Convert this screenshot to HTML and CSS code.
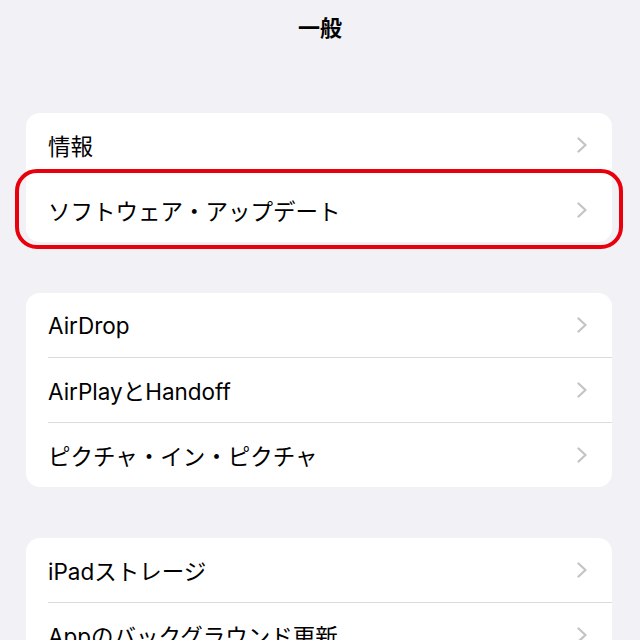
FILE: index.html
```html
<!DOCTYPE html>
<html lang="ja">
<head>
<meta charset="utf-8">
<title>一般</title>
<link rel="stylesheet" href="styles.css">
</head>
<body>
<div class="page">
  <header class="header"><h1 class="title">一般</h1></header>
  <main class="groups">
    <section class="card">
      <div class="row"><div class="cell"><span class="label">情報</span><svg class="chev" viewBox="0 0 11 16"><polyline points="1.5,1.5 8.5,8 1.5,14.5"/></svg></div></div>
      <div class="row row-hl"><div class="cell"><span class="label">ソフトウェア・アップデート</span><svg class="chev" viewBox="0 0 11 16"><polyline points="1.5,1.5 8.5,8 1.5,14.5"/></svg></div><div class="highlight"></div></div>
    </section>
    <section class="card">
      <div class="row"><div class="cell"><span class="label">AirDrop</span><svg class="chev" viewBox="0 0 11 16"><polyline points="1.5,1.5 8.5,8 1.5,14.5"/></svg></div></div>
      <div class="row"><div class="cell"><span class="label">AirPlayとHandoff</span><svg class="chev" viewBox="0 0 11 16"><polyline points="1.5,1.5 8.5,8 1.5,14.5"/></svg></div></div>
      <div class="row"><div class="cell"><span class="label">ピクチャ・イン・ピクチャ</span><svg class="chev" viewBox="0 0 11 16"><polyline points="1.5,1.5 8.5,8 1.5,14.5"/></svg></div></div>
    </section>
    <section class="card">
      <div class="row"><div class="cell"><span class="label">iPadストレージ</span><svg class="chev" viewBox="0 0 11 16"><polyline points="1.5,1.5 8.5,8 1.5,14.5"/></svg></div></div>
      <div class="row"><div class="cell"><span class="label">Appのバックグラウンド更新</span><svg class="chev" viewBox="0 0 11 16"><polyline points="1.5,1.5 8.5,8 1.5,14.5"/></svg></div></div>
    </section>
  </main>
</div>
</body>
</html>
```
FILE: styles.css
```css
html, body {
  margin: 0;
  padding: 0;
  background: #f2f1f6;
}
body {
  font-family: "Inter", "Noto Sans CJK JP", sans-serif;
  color: #000;
  overflow: hidden;
  height: 640px;
}
.page {
  width: 640px;
  height: 640px;
  overflow: hidden;
}
.header {
  height: 52px;
  display: flex;
  align-items: center;
  justify-content: center;
}
.title {
  margin: 0;
  font-size: 22px;
  font-weight: 700;
  font-family: "Noto Sans CJK JP", sans-serif;
  line-height: 1;
}
.groups {
  display: flex;
  flex-direction: column;
  gap: 51px;
  padding: 61px 28px 0 26px;
}
.card {
  background: #fff;
  border-radius: 14px;
}
.row {
  padding-left: 22px;
  position: relative;
}
.cell {
  height: 64px;
  display: flex;
  align-items: center;
  justify-content: space-between;
  padding-right: 24px;
}
.row + .row .cell {
  border-top: 1px solid #dcdcdf;
}
.row + .row-hl .cell {
  border-top-color: #fff;
}
.label {
  font-size: 22.5px;
  letter-spacing: 0;
  white-space: nowrap;
}
.chev {
  width: 11px;
  height: 16px;
  fill: none;
  stroke: #c4c4c7;
  stroke-width: 2.3;
  stroke-linecap: round;
  stroke-linejoin: round;
}
.highlight {
  position: absolute;
  left: -11px;
  right: -11px;
  top: -8px;
  bottom: -7px;
  border: 4px solid #e8000c;
  border-radius: 22px;
  pointer-events: none;
}
```
